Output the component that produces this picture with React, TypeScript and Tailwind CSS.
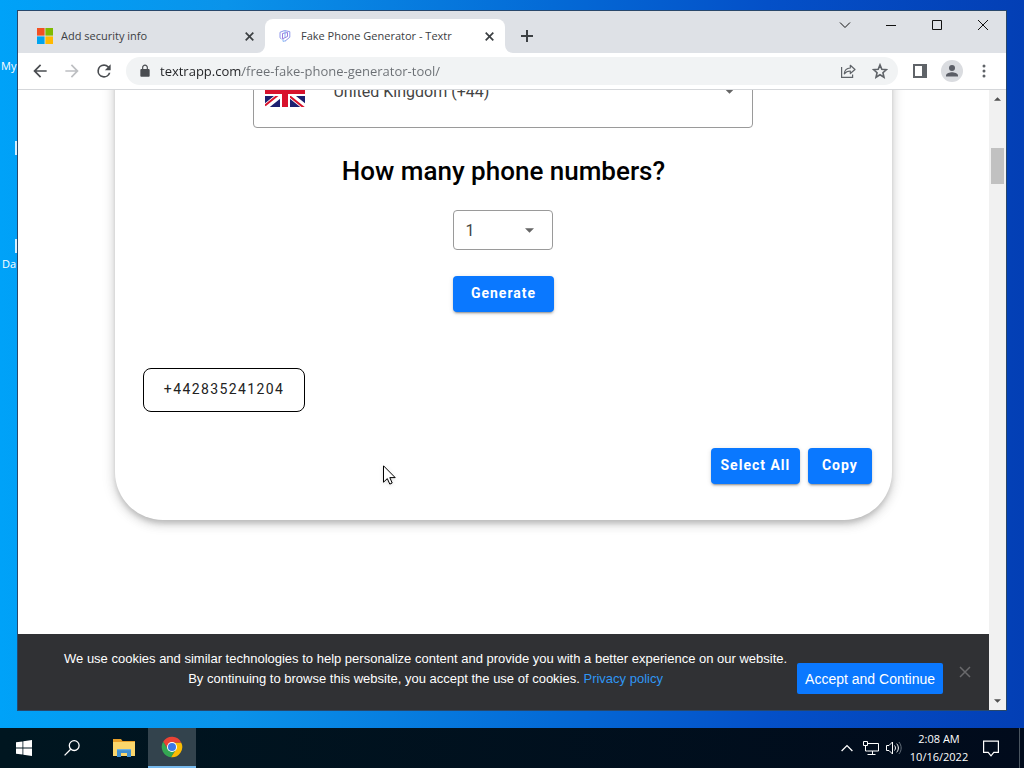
import { ReactNode } from 'react'
import clsx from 'clsx'

function MicrosoftLogo() {
  return (
    <svg className="size-4 shrink-0" viewBox="0 0 16 16" aria-hidden="true">
      <path fill="#f25022" d="M0 0h7.600v7.600H0z" />
      <path fill="#7fba00" d="M8.400 0H16v7.600H8.400z" />
      <path fill="#00a4ef" d="M0 8.400h7.600V16H0z" />
      <path fill="#ffb900" d="M8.400 8.400H16V16H8.400z" />
    </svg>
  )
}

function TextrLogo() {
  return (
    <svg className="size-4 shrink-0" viewBox="0 0 16 16" fill="none" aria-hidden="true">
      <path d="M4.500 11 3 9.800V4.300L7.500 2.500l5.300 1.200v5.500L8 13.200" stroke="#8e96ea" strokeWidth="1" />
      <path d="M5.500 5.500 10.500 4.500v4L5.500 10.800z" stroke="#8f6fdc" strokeWidth=".9" />
      <path d="M8 3v6.200M6 11v2.400l2.500-.6" stroke="#7fb0f2" strokeWidth=".9" />
    </svg>
  )
}

function TabCurve({ side }: { side: 'left' | 'right' }) {
  return (
    <svg
      className={clsx('absolute bottom-0 size-2', side === 'left' ? '-left-2' : '-right-2')}
      viewBox="0 0 8 8"
      aria-hidden="true"
    >
      <path fill="#fff" d={side === 'left' ? 'M8 0v8H0a8 8 0 0 0 8-8z' : 'M0 0v8h8a8 8 0 0 1-8-8z'} />
    </svg>
  )
}

function Tab({ icon, title, active }: { icon: ReactNode; title: string; active?: boolean }) {
  return (
    <div
      className={clsx(
        'relative flex h-[34px] w-[240px] items-center gap-2 rounded-t-lg pr-2.5 pl-3 text-[#3c4043]',
        active && 'bg-white'
      )}
    >
      {active && <TabCurve side="left" />}
      {icon}
      <span className="flex-1 truncate text-[11px] leading-4">{title}</span>
      <button type="button" aria-label="Close tab" className="flex size-3 items-center justify-center">
        <svg className="size-[9px]" viewBox="0 0 9 9" stroke="#3c4043" strokeWidth="1.700">
          <path d="M.7.7l7.600 7.600M8.300.7L.7 8.300" />
        </svg>
      </button>
      {active && <TabCurve side="right" />}
    </div>
  )
}

function WindowButton({ label, children }: { label: string; children: ReactNode }) {
  return (
    <button type="button" aria-label={label} className="flex h-7 w-[46px] items-center justify-center">
      <svg className="size-3" viewBox="0 0 12 12" fill="none" stroke="#111" strokeWidth="1">
        {children}
      </svg>
    </button>
  )
}

function TabStrip() {
  return (
    <div className="flex h-[42px] items-end bg-[#dee1e6] pl-[7px]">
      <Tab icon={<MicrosoftLogo />} title="Add security info" />
      <Tab icon={<TextrLogo />} title="Fake Phone Generator - Textr" active />
      <button type="button" aria-label="New tab" className="ml-2 flex h-[34px] w-7 items-center justify-center">
        <svg className="size-3" viewBox="0 0 12 12" stroke="#3c4043" strokeWidth="2">
          <path d="M6 0v12M0 6h12" />
        </svg>
      </button>
      <div className="ml-auto flex self-start">
        <WindowButton label="Search tabs">
          <path d="M1 3.500l5 5 5-5" />
        </WindowButton>
        <WindowButton label="Minimize">
          <path d="M1 6.500h10" />
        </WindowButton>
        <WindowButton label="Maximize">
          <path d="M1.500 1.500h9v9h-9z" />
        </WindowButton>
        <WindowButton label="Close">
          <path d="M1 1l10 10M11 1L1 11" />
        </WindowButton>
      </div>
    </div>
  )
}

function ToolButton({ label, children }: { label: string; children: ReactNode }) {
  return (
    <button type="button" aria-label={label} className="flex size-7 items-center justify-center">
      {children}
    </button>
  )
}

function Toolbar() {
  return (
    <div className="flex h-[37px] items-center gap-2 border-b border-[#d5d7da] bg-white px-2">
      <div className="flex gap-1">
        <ToolButton label="Back">
          <svg className="size-5" viewBox="0 0 24 24" fill="#4a4d51">
            <path d="M20 11H7.830l5.590-5.590L12 4l-8 8 8 8 1.410-1.410L7.830 13H20z" />
          </svg>
        </ToolButton>
        <ToolButton label="Forward">
          <svg className="size-5" viewBox="0 0 24 24" fill="#bdbfc2">
            <path d="M4 13h12.170l-5.590 5.590L12 20l8-8-8-8-1.410 1.410L16.170 11H4z" />
          </svg>
        </ToolButton>
        <ToolButton label="Reload">
          <svg className="size-5" viewBox="0 0 24 24" fill="#4a4d51">
            <path d="M17.650 6.350A7.960 7.960 0 0 0 12 4a8 8 0 1 0 7.730 10h-2.080A6 6 0 1 1 12 6c1.660 0 3.140.69 4.220 1.780L13 11h7V4z" />
          </svg>
        </ToolButton>
      </div>
      <div className="flex h-7 flex-1 items-center rounded-full bg-[#f1f3f4] pr-1 pl-3">
        <svg className="mr-2 size-3.5" viewBox="0 0 24 24" fill="#4a4d51" aria-hidden="true">
          <path d="M18 8.500h-1V6.200C17 3.300 14.800 1 12 1S7 3.300 7 6.200V8.500H6c-1.100 0-2 .9-2 2V20c0 1.100.9 2 2 2h12c1.100 0 2-.9 2-2v-9.500c0-1.100-.9-2-2-2zM9 8.500V6.200C9 4.400 10.300 3 12 3s3 1.400 3 3.200v2.300z" />
        </svg>
        <input
          type="text"
          aria-label="Address"
          defaultValue="textrapp.com/free-fake-phone-generator-tool/"
          className="min-w-0 flex-1 bg-[linear-gradient(90deg,#202124_82px,#6a6e73_82px)] bg-clip-text pt-0.5 text-[13px] text-transparent outline-none"
        />
        <div className="flex gap-1">
          <ToolButton label="Share this page">
            <svg className="size-4" viewBox="0 0 16 16" fill="none" stroke="#5f6368" strokeWidth="1.200">
              <path d="M1.600 4v10.400h11V11.500" />
              <path d="M4.300 10.800c.2-3.600 2.300-5.600 6-5.800V2.300L15 6.500l-4.700 4V8c-2.700 0-4.500.8-6 2.800z" strokeLinejoin="round" />
            </svg>
          </ToolButton>
          <ToolButton label="Bookmark this tab">
            <svg className="size-4" viewBox="0 0 24 24" fill="none" stroke="#5f6368" strokeWidth="2.400">
              <path d="M12 2.800l2.700 6.500 7 .6-5.300 4.600 1.600 6.900-6-3.700-6 3.700 1.600-6.900-5.300-4.600 7-.6z" />
            </svg>
          </ToolButton>
        </div>
      </div>
      <div className="flex gap-1">
        <ToolButton label="Side panel">
          <svg className="size-3.5" viewBox="0 0 14 14">
            <path d="M1 1h12v12H1z" fill="#fff" stroke="#5f6368" strokeWidth="2" />
            <path d="M9 0h5v14H9z" fill="#5f6368" />
          </svg>
        </ToolButton>
        <ToolButton label="Profile">
          <svg className="size-[22px]" viewBox="0 0 22 22">
            <circle cx="11" cy="11" r="11" fill="#dadce0" />
            <circle cx="11" cy="8" r="3" fill="#5b5e66" />
            <path d="M5 16.500v-1.200c0-2 4-3.100 6-3.100s6 1.100 6 3.100v1.200z" fill="#5b5e66" />
          </svg>
        </ToolButton>
        <ToolButton label="Menu">
          <svg className="size-3.5" viewBox="0 0 14 14" fill="#5f6368">
            <circle cx="7" cy="2" r="1.500" />
            <circle cx="7" cy="7" r="1.500" />
            <circle cx="7" cy="12" r="1.500" />
          </svg>
        </ToolButton>
      </div>
    </div>
  )
}

function UkFlag() {
  return (
    <svg className="h-8 w-10 shrink-0" viewBox="0 0 40 32" preserveAspectRatio="none" aria-hidden="true">
      <path fill="#1d2070" d="M0 0h40v32H0z" />
      <path stroke="#fff" strokeWidth="6" d="M0 0l40 32M40 0L0 32" />
      <path stroke="#d8122c" strokeWidth="2" d="M0 1.500l40 32M40-1.500L0 30.500" />
      <path stroke="#fff" strokeWidth="10" d="M20 0v32M0 16h40" />
      <path stroke="#d8122c" strokeWidth="6" d="M20 0v32M0 16h40" />
    </svg>
  )
}

function Caret() {
  return (
    <svg className="pointer-events-none absolute right-[18px] h-[5px] w-[9px]" viewBox="0 0 10 5" aria-hidden="true">
      <path fill="#666" d="M0 0h10L5 5z" />
    </svg>
  )
}

function BlueButton({ className, children }: { className: string; children: ReactNode }) {
  return (
    <button
      type="button"
      className={clsx(
        'h-9 rounded bg-[#0a78ff] pb-0.5 text-sm font-bold tracking-[1px] whitespace-nowrap text-white shadow-[0_3px_1px_-2px_rgba(0,0,0,0.2),0_2px_2px_rgba(0,0,0,0.14),0_1px_5px_rgba(0,0,0,0.12)]',
        className
      )}
    >
      {children}
    </button>
  )
}

function GeneratorCard() {
  return (
    <section className="mx-auto -mt-9 flex w-4/5 flex-col rounded-b-[48px] bg-white pr-5 pb-9 pl-7 font-[Roboto,sans-serif] shadow-[0_4px_5px_-1px_rgba(0,0,0,0.14),0_4px_10px_1px_rgba(0,0,0,0.1),0_2px_14px_2px_rgba(0,0,0,0.09)]">
      <div className="flex flex-col items-center pr-2">
        <div className="relative flex h-[74px] w-[500px] items-center rounded border border-[#9a9a9a] pl-[11px]">
          <UkFlag />
          <select
            aria-label="Country"
            className="h-full flex-1 appearance-none rounded bg-transparent pt-0.5 pl-7 text-base text-[#444]"
          >
            <option>United Kingdom (+44)</option>
          </select>
          <Caret />
        </div>
        <h2 className="mt-6 text-[26px] leading-[38px] font-medium text-black">How many phone numbers?</h2>
        <div className="relative mt-5 flex h-10 w-[100px] items-center rounded border border-[#9a9a9a]">
          <select
            aria-label="How many phone numbers?"
            className="h-full flex-1 appearance-none rounded bg-transparent pt-0.5 pl-[11px] text-base text-[#444]"
          >
            <option>1</option>
          </select>
          <Caret />
        </div>
        <BlueButton className="mt-[26px] w-[101px]">Generate</BlueButton>
      </div>
      <button
        type="button"
        className="mt-14 h-11 w-[162px] self-start rounded-lg border border-black pb-0.5 text-sm tracking-widest text-[#222]"
      >
        +442835241204
      </button>
      <div className="mt-9 flex justify-end gap-2">
        <BlueButton className="w-[89px]">Select All</BlueButton>
        <BlueButton className="w-16">Copy</BlueButton>
      </div>
    </section>
  )
}

function CookieBar() {
  return (
    <div className="flex h-[76px] items-end bg-[#303134] pr-[18px] pb-4 pl-[46px] font-['Liberation_Sans',Arial,sans-serif] text-[13px] text-white">
      <p className="flex-1 self-start pt-[15px] text-center leading-5 whitespace-nowrap">
        We use cookies and similar technologies to help personalize content and provide you with a better experience on our website.
        <br />
        By continuing to browse this website, you accept the use of cookies.{' '}
        <a href="#privacy" className="text-[#2f96f3]">
          Privacy policy
        </a>
      </p>
      <button type="button" className="ml-2.5 h-[31px] w-[146px] rounded-xs bg-[#0a78ff] text-sm whitespace-nowrap">
        Accept and Continue
      </button>
      <button type="button" aria-label="Dismiss" className="ml-4 flex h-11 items-center">
        <svg className="size-3" viewBox="0 0 12 12" stroke="#6a6a6c" strokeWidth="1.500">
          <path d="M1 1l10 10M11 1L1 11" />
        </svg>
      </button>
    </div>
  )
}

function Scrollbar() {
  return (
    <div className="flex w-[17px] flex-col items-center bg-[#f1f1f1] py-[7px]">
      <svg className="h-1 w-[7px]" viewBox="0 0 8 4" aria-hidden="true">
        <path fill="#505050" d="M4 0l4 4H0z" />
      </svg>
      <div className="mt-[47px] h-9 w-[13px] bg-[#c1c1c1]" />
      <svg className="mt-auto h-1 w-[7px]" viewBox="0 0 8 4" aria-hidden="true">
        <path fill="#505050" d="M0 0h8L4 4z" />
      </svg>
    </div>
  )
}

function Taskbar() {
  return (
    <footer className="flex h-10 items-stretch bg-[linear-gradient(90deg,#001620,#010b1c)] text-white">
      <button type="button" aria-label="Start" className="flex w-12 items-center justify-center">
        <svg className="size-4" viewBox="0 0 16 16" fill="#fff">
          <path d="M0 2.300l6.500-.9v6.200H0zM7.300 1.300L16 0v7.600H7.300zM0 8.400h6.500v6.200L0 13.700zM7.300 8.400H16V16l-8.700-1.300z" />
        </svg>
      </button>
      <button type="button" aria-label="Search" className="flex w-12 items-center justify-center">
        <svg className="size-4" viewBox="0 0 16 16" fill="none" stroke="#fff" strokeWidth="1.300">
          <circle cx="10.200" cy="5.600" r="4.900" />
          <path d="M6.700 9.200L.6 15.400" />
        </svg>
      </button>
      <button type="button" aria-label="File Explorer" className="ml-1 flex w-12 items-center justify-center">
        <svg className="h-[18px] w-[22px]" viewBox="0 0 22 18">
          <path fill="#e8a02a" d="M0 0h8l1.500 2H22v5H0z" />
          <path fill="#fbd66b" d="M0 3h22v14H0z" />
          <path fill="#3f8fd0" d="M4 10h14v8h-4v-4h-6v4H4z" />
          <path fill="#6fb1e0" d="M4 10h14v1.200H4z" />
        </svg>
      </button>
      <button
        type="button"
        aria-label="Google Chrome"
        className="flex w-12 items-center justify-center border-b-2 border-[#76b9ed] bg-[#33434d]"
      >
        <svg className="size-[22px]" viewBox="0 0 48 48">
          <path fill="#34a853" d="M24 24L15.300 29 5 12A22.500 22.500 0 0 0 22 46.400L33 29z" />
          <path fill="#fbbc04" d="M24 14h20A22.500 22.500 0 0 1 22 46.400L33 29z" />
          <path fill="#ea4335" d="M5 12l10.300 17L24 14h20A22.500 22.500 0 0 0 5 12z" />
          <circle cx="24" cy="24" r="11" fill="#fff" />
          <circle cx="24" cy="24" r="8.800" fill="#3b78e7" />
        </svg>
      </button>
      <div className="ml-auto flex items-center">
        <button type="button" aria-label="Show hidden icons">
          <svg className="h-2 w-3" viewBox="0 0 12 8" fill="none" stroke="#fff" strokeWidth="1.300">
            <path d="M.6 7L6 1.600 11.400 7" />
          </svg>
        </button>
        <svg className="ml-2.5 size-4" viewBox="0 0 16 16" fill="none" stroke="#fff" aria-hidden="true">
          <path d="M5 3.500h10.500v7.500h-11M4.500 14.500h8M9.500 11v3.500M.5 1.500h4v4h-4zM2.500 5.500V11h2" />
        </svg>
        <svg className="ml-[7px] size-4" viewBox="0 0 16 16" fill="none" stroke="#fff" aria-hidden="true">
          <path d="M.5 5.500h2.500l3.500-3.500v12L3 10.500H.5z" />
          <path d="M8.500 5.500c1.300 1.500 1.300 3.500 0 5M10.700 3.700c2.200 2.600 2.200 6 0 8.600" />
          <path d="M12.900 2c3 3.600 3 8.400 0 12" stroke="#66717c" />
        </svg>
        <time className="ml-[7px] flex w-[60px] flex-col items-center text-[11px] leading-[18px] whitespace-nowrap">
          <span>2:08 AM</span>
          <span>10/16/2022</span>
        </time>
        <button type="button" aria-label="Notifications" className="mr-5 ml-3.5">
          <svg className="h-[17px] w-4" viewBox="0 0 16 17" fill="none" stroke="#fff" strokeWidth="1.200">
            <path d="M.6 1.200h14.800v11.200h-4.600L8 15.800l-2.800-3.400H.6z" />
          </svg>
        </button>
        <span className="mr-1 h-10 w-px bg-[#4a5560]" />
      </div>
    </footer>
  )
}

function Cursor() {
  return (
    <svg className="absolute top-[375px] left-[365px] h-5 w-[13px] drop-shadow" viewBox="0 0 13 20" aria-hidden="true">
      <path fill="#fff" stroke="#000" d="M.5.8v16.400l3.800-3.600 2.500 5.500 2.400-1.100-2.400-5.400h5.400z" />
    </svg>
  )
}

export default function App() {
  return (
    <div className="flex h-screen flex-col font-['Open_Sans','Noto_Sans',sans-serif]">
      <div className="relative flex min-h-0 flex-1 flex-col bg-[linear-gradient(90deg,#00a2f8_0%,#0a93ea_22%,#046ad6_54%,#0450c8_75%,#033fb5_100%)] px-[17px] pt-2.5 pb-[17px]">
        {/* desktop shortcuts peeking out from behind the window */}
        <div className="absolute top-0 left-0 w-[17px] text-[11px] leading-4 whitespace-nowrap text-white">
          <span className="mt-[58px] block pl-px">My</span>
          <span className="mt-[67px] ml-auto block h-3.5 w-0.5 bg-[#d7effc]" />
          <span className="mt-[84px] ml-auto block h-3.5 w-0.5 bg-[#d7effc]" />
          <span className="mt-[3px] block pl-0.5">Da</span>
        </div>
        <div className="relative flex min-h-0 flex-1 flex-col border border-[#28476b] bg-white">
          <TabStrip />
          <Toolbar />
          <div className="flex min-h-0 flex-1">
            <div className="relative flex min-w-0 flex-1 flex-col overflow-hidden">
              <main className="min-h-0 flex-1">
                <GeneratorCard />
              </main>
              <CookieBar />
              <Cursor />
            </div>
            <Scrollbar />
          </div>
        </div>
      </div>
      <Taskbar />
    </div>
  )
}
